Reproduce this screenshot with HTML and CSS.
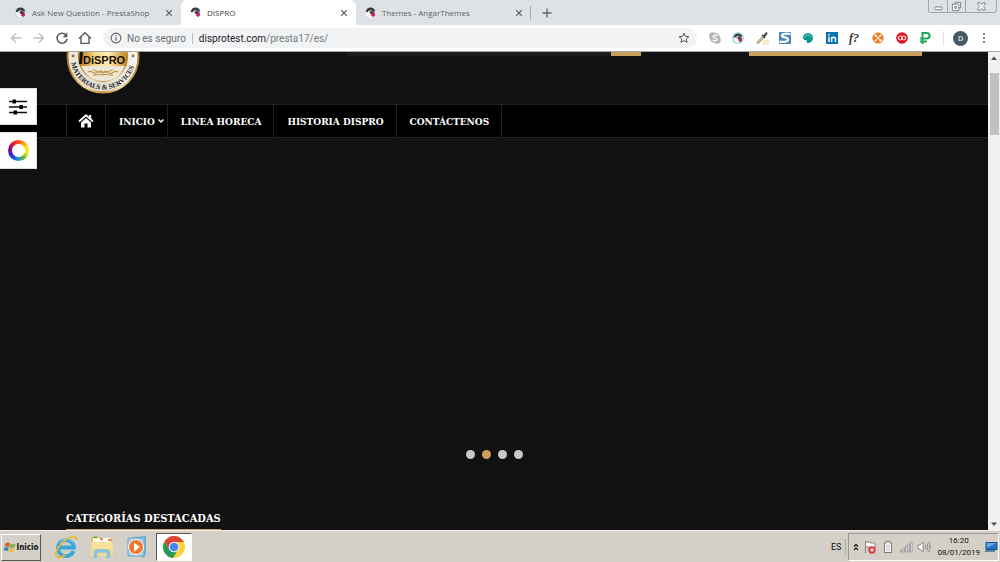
FILE: index.html
```html
<!DOCTYPE html>
<html lang="es">
<head>
<meta charset="utf-8">
<title>DISPRO</title>
<link rel="stylesheet" href="styles.css">
</head>
<body>
<svg class="defs" aria-hidden="true">
  <symbol id="puffin" viewBox="0 0 12 12">
    <circle cx="6" cy="6" r="5.500" fill="#f4f4f4"/>
    <path d="M.8 5C1 2.400 3.500.6 6 .6c3 0 5 2 5.200 4.600L8 4 5 3.500 2.500 6z" fill="#3d3b40"/>
    <path d="M2 7l1.500-2.500L6 5v2l2 3-2 1.500C4 11.500 2.500 10 2 7z" fill="#fff"/>
    <path d="M5 5l3-1 2 1.500v2L7 8 5.500 7z" fill="#4a4148"/>
    <path d="M7 7.500L10.800 6v3.500L8.500 11 6.500 9z" fill="#d6195f"/>
    <circle cx="4.500" cy="5.300" r=".8" fill="#bd8c3b"/>
  </symbol>
  <symbol id="close" viewBox="0 0 8 8"><path d="M1.200 1.200l5.600 5.600M6.800 1.200L1.200 6.800" stroke="#5a5d61" stroke-width="1.200"/></symbol>
</svg>

<header class="browser">
  <div class="tabs">
    <div class="tab"><svg class="favicon halo"><use href="#puffin"/></svg><span class="tab-title">Ask New Question - PrestaShop</span><button class="close" aria-label="Cerrar"><svg><use href="#close"/></svg></button></div>
    <div class="tab active"><svg class="favicon"><use href="#puffin"/></svg><span class="tab-title">DISPRO</span><button class="close" aria-label="Cerrar"><svg><use href="#close"/></svg></button></div>
    <div class="tab last"><svg class="favicon"><use href="#puffin"/></svg><span class="tab-title">Themes - AngarThemes</span><button class="close" aria-label="Cerrar"><svg><use href="#close"/></svg></button></div>
    <button class="new-tab" aria-label="Nueva pestaña"><svg viewBox="0 0 10 10"><path d="M5 .5v9M.5 5h9" stroke="#5f6368" stroke-width="1.300"/></svg></button>
    <div class="window-controls">
      <button aria-label="Minimizar"><svg viewBox="0 0 12 12"><rect x="2" y="6.500" width="8" height="3" rx="1" fill="#fff" stroke="#777"/></svg></button>
      <button aria-label="Restaurar"><svg viewBox="0 0 12 12"><path d="M4.500 3.500v-2h6v6h-2" fill="#fff" stroke="#777"/><path d="M1.500 3.500h7v7h-7zM4 6h2v2H4z" fill="#fff" stroke="#777"/></svg></button>
      <button class="wide" aria-label="Cerrar ventana"><svg viewBox="0 0 12 12"><path d="M2 2h2.500L6 4l1.500-2H10v1.500L8 6l2 2.500V10H7.500L6 8l-1.500 2H2V8.500L4 6 2 3.500z" fill="#fff" stroke="#777"/></svg></button>
    </div>
  </div>
  <div class="toolbar">
    <div class="nav-buttons">
      <button aria-label="Atrás"><svg viewBox="0 0 14 14"><path d="M12.500 7H2.500M7 2.500L2.500 7 7 11.500" fill="none" stroke="#babcbe" stroke-width="1.300"/></svg></button>
      <button aria-label="Adelante"><svg viewBox="0 0 14 14"><path d="M1.500 7h10M7 2.500L11.500 7 7 11.500" fill="none" stroke="#babcbe" stroke-width="1.300"/></svg></button>
      <button aria-label="Recargar"><svg viewBox="0 0 14 14"><path d="M11.300 4.500A5 5 0 1 0 12 8" fill="none" stroke="#55585c" stroke-width="1.500"/><path d="M12.300 1.500v4.700H7.700z" fill="#55585c"/></svg></button>
      <button aria-label="Inicio"><svg viewBox="0 0 14 14"><path d="M1 7.500L7 1.800l6 5.700M3 6.200v6.200h8V6.200" fill="none" stroke="#55585c" stroke-width="1.400"/></svg></button>
    </div>
    <div class="address">
      <svg class="info" viewBox="0 0 12 12"><circle cx="6" cy="6" r="4.900" fill="none" stroke="#5f6368" stroke-width="1.100"/><path d="M6 5.300v3.500M6 3v1.300" stroke="#5f6368" stroke-width="1.200"/></svg>
      <span class="secure">No es seguro</span>
      <span class="url"><b>disprotest.com</b>/presta17/es/</span>
      <svg class="star" viewBox="0 0 12 12"><path d="M6 1.200l1.400 3.200 3.500.3-2.700 2.300.8 3.400-3-1.800-3 1.800.8-3.400L1.100 4.700l3.500-.3z" fill="none" stroke="#55585c"/></svg>
    </div>
    <div class="extensions">
      <svg viewBox="0 0 14 14"><circle cx="5" cy="5" r="3.800" fill="#b5b5b5"/><circle cx="9" cy="9" r="3.800" fill="#b5b5b5"/><circle cx="7" cy="7" r="5" fill="#b5b5b5"/><path d="M9.200 5.200C8.500 3.700 5 3.800 5 5.500c0 1.800 4.200 1 4.200 3 0 1.700-3.700 1.800-4.400.2" fill="none" stroke="#fff" stroke-width="1.200"/></svg>
      <svg viewBox="0 0 14 14"><circle cx="7" cy="7" r="6" fill="#9edbe5"/><use href="#puffin" x="2" y="2" width="10" height="10"/></svg>
      <svg viewBox="0 0 14 14"><path d="M2 12.500l.5-2 5-5 1.500 1.500-5 5z" fill="#d9bd78" stroke="#777" stroke-width=".6"/><path d="M6.500 4.200l1-.8 1 .8 2-2.500c1-1 2.500.2 1.700 1.500L10 5.700l.6 1-.8.8z" fill="#3d3d3d"/><rect x="7.500" y="8.500" width="6.500" height="5.500" rx="1" fill="#f4ebcf"/></svg>
      <svg viewBox="0 0 14 14"><path d="M1 1h12v12H1z" fill="#4688bd"/><path d="M12.500 3C9 2.500 4 2.500 4 4.700 4 7 10 5.700 10 8.500c0 2.500-5 2.700-8.500 2.200" fill="none" stroke="#fff" stroke-width="2.200"/></svg>
      <svg viewBox="0 0 14 14"><path d="M7 2.300C3.800 2.300 2 4.300 2 6.600c0 2 1.500 3 3 2.700 1-.2 1 .5.8 1.200-.2 1.200.5 1.800 1.500 1.600C10 11.600 12 9.600 12 7c0-2.800-2.200-4.700-5-4.700z" fill="#009688"/><g fill="#bfe6e2"><circle cx="4" cy="6" r=".7"/><circle cx="5.800" cy="4.300" r=".7"/><circle cx="8.200" cy="4.300" r=".7"/><circle cx="10" cy="6" r=".7"/></g></svg>
      <svg viewBox="0 0 14 14"><path d="M1 1h12v12H1z" fill="#0a74b2"/><path d="M4 5.700V11M4 3v1.500M6.700 11V5.700M6.700 8c0-2.400 3.800-2.500 3.800 0v3" fill="none" stroke="#fff" stroke-width="1.500"/></svg>
      <svg viewBox="0 0 14 14"><text x="1" y="11" class="fq">f?</text></svg>
      <svg viewBox="0 0 14 14"><circle cx="7" cy="7" r="5.600" fill="#f47a27"/><path d="M4.500 4.500l5 5M9.500 4.500l-5 5" stroke="#fff"/><g fill="#fff"><circle cx="4.500" cy="4.500" r="1.300"/><circle cx="9.500" cy="4.500" r="1"/><circle cx="4.500" cy="9.500" r="1"/><circle cx="9.500" cy="9.500" r="1.300"/></g></svg>
      <svg viewBox="0 0 14 14"><circle cx="7" cy="7" r="5.800" fill="#e2141d"/><g fill="none" stroke="#fff"><circle cx="5.300" cy="7" r="2"/><circle cx="8.700" cy="7" r="2"/></g></svg>
      <svg viewBox="0 0 14 14"><path d="M4.500 13V2h4.300c3.700 0 3.700 5.500 0 5.500H2M2 10.500h7" fill="none" stroke="#20a65a" stroke-width="2"/></svg>
    </div>
    <div class="profile"><button class="avatar">D</button></div>
    <button class="menu" aria-label="Menú"><svg viewBox="0 0 4 12"><g fill="#5f6368"><circle cx="2" cy="2" r="1.100"/><circle cx="2" cy="6" r="1.100"/><circle cx="2" cy="10" r="1.100"/></g></svg></button>
  </div>
</header>

<div class="viewport">
  <main class="page">
    <div class="site-header">
      <svg class="logo" viewBox="0 0 74 42" role="img" aria-label="DISPRO Materials &amp; Services">
        <defs>
          <linearGradient id="gold"><stop offset="0" stop-color="#a77026"/><stop offset=".25" stop-color="#f4d58b"/><stop offset=".5" stop-color="#c98e36"/><stop offset=".75" stop-color="#f4dc9c"/><stop offset="1" stop-color="#b17a2c"/></linearGradient>
          <linearGradient id="face"><stop offset="0" stop-color="#b37820"/><stop offset=".35" stop-color="#f7db87"/><stop offset=".6" stop-color="#fff0b3"/><stop offset="1" stop-color="#c18725"/></linearGradient>
          <linearGradient id="silver"><stop offset="0" stop-color="#eee9dc"/><stop offset=".5" stop-color="#dfdbd4"/><stop offset="1" stop-color="#f8f6ef"/></linearGradient>
          <path id="ring" d="M4.500 5a32.500 32.500 0 0 0 65 0"/>
        </defs>
        <circle cx="37" cy="5" r="36.500" fill="url(#gold)"/>
        <circle cx="37" cy="5" r="34.500" fill="url(#silver)"/>
        <circle cx="37" cy="5" r="25" fill="url(#gold)"/>
        <path d="M13 0h48v14H14z" fill="url(#face)"/>
        <path d="M15 14h44c-5 10-12 15-22 15S20 23 15 14z" fill="#eee8d9"/>
        <path d="M14 0h3l-1 12h-3z" fill="#17130c"/>
        <text x="17" y="12" class="logo-name">DiSPRO</text>
        <g fill="none" stroke="#c39749" stroke-width="1.200"><path d="M22 20c4-3 5 3 9 1s3-3 6 0c3-3 2-2 6 0s5-4 9-1M27 23c4 1 7-2 10 0 3-2 6 1 10 0M27 18c3 0 5 3 10 2 5 1 7-2 10-2"/></g>
        <circle cx="7" cy="4" r="1.400" fill="#956956"/><circle cx="67" cy="4" r="1.400" fill="#956956"/>
        <text class="logo-ring"><textPath href="#ring" startOffset="6">MATERIALS &amp; SERVICES</textPath></text>
      </svg>
      <div class="search-strip"><span class="search-field"></span><span class="search-button"></span></div>
      <span class="cart-strip"></span>
    </div>
    <nav class="site-nav">
      <a class="home" href="#" aria-label="Inicio"><svg viewBox="0 0 16 14"><path d="M1 7.500L8 1.300l7 6.200" fill="none" stroke="#fff" stroke-width="1.800"/><path d="M11 1h2.200v4.500L11 3.500zM8 4l5 4.400V13.500H9.500V9.500h-3v4H3V8.400z" fill="#fff"/></svg></a>
      <a class="has-menu" href="#">INICIO<svg viewBox="0 0 6 6"><path d="M.5 1.500L3 4l2.500-2.500" fill="none" stroke="#fff" stroke-width="1.500"/></svg></a>
      <a href="#">LINEA HORECA</a>
      <a href="#">HISTORIA DISPRO</a>
      <a href="#">CONTÁCTENOS</a>
    </nav>
    <section class="slider">
      <button aria-label="1"></button><button class="current" aria-label="2"></button><button aria-label="3"></button><button aria-label="4"></button>
    </section>
    <section class="featured"><h2>CATEGORÍAS DESTACADAS</h2></section>
  </main>
  <div class="scrollbar"><svg viewBox="0 0 12 12"><path d="M3 8l3-3.500L9 8z" fill="#505050"/></svg><span class="thumb"></span><svg class="down" viewBox="0 0 12 12"><path d="M3 4.500L6 8l3-3.500z" fill="#505050"/></svg></div>
  <div class="side-tools">
    <button aria-label="Ajustes"><svg viewBox="0 0 20 18"><path d="M1 3.500h18M1 9h18M1 14.500h18" stroke="#111" stroke-width="1.400"/><path d="M4.500 1.500H8v4H4.500zM11.500 7H15v4h-3.500zM5.500 12.500H9v4H5.500z" fill="#000"/></svg></button>
    <button aria-label="Colores"><span class="wheel"></span></button>
  </div>
</div>

<footer class="taskbar">
  <button class="start"><svg viewBox="0 0 12 12"><path d="M1.500 2.500C3 1 4.500 1.500 6 2.500L5 6C3.500 5 2 5 .5 6z" fill="#e4572b"/><path d="M6.500 2.700c1.500 1 3 1 5 0l-1 3.500c-2 1-3.500 1-5 0z" fill="#77b443"/><path d="M.3 6.600C2 5.700 3.500 5.800 4.800 6.700l-1 3.500C2.500 9.300 1 9.300-.5 10z" fill="#3c82cb"/><path d="M5.300 7c1.500 1 3 1 5 0l-1 3.500c-2 1-3.500.8-5 0z" fill="#f3bd38"/></svg>Inicio</button>
  <div class="apps">
    <button aria-label="Internet Explorer"><svg viewBox="0 0 24 24"><path d="M19.500 16A8 8 0 1 1 20 12.500H6" fill="none" stroke="#36a8dc" stroke-width="3.800"/><path d="M6 9a7 7 0 0 1 13-1" fill="none" stroke="#8ddcf5"/><path d="M3.500 22C-2 19 7 7 15 3c5-2.500 8-2 7 2M3.500 22c2 1 5-.5 8-2.500" fill="none" stroke="#ecb82e" stroke-width="1.800"/></svg></button>
    <button aria-label="Explorador"><svg viewBox="0 0 24 24"><path d="M1 3l1-1.500h7L10 3h12v17H1z" fill="#dcbf62"/><path d="M3 3h18v5H3z" fill="#fffbe9"/><path d="M4 2.500h3" stroke="#3ba558" stroke-width="1.500"/><path d="M10 4h3M18 5h3" stroke="#d45b3c" stroke-width="1.500"/><path d="M1 7h22v14H1z" fill="#f5dc8c"/><path d="M2 9h20M2 12h20" stroke="#fff0b8"/><path d="M5.500 23v-5q0-2 2-2h9q2 0 2 2v5" fill="none" stroke="#83c5e5" stroke-width="3.500"/></svg></button>
    <button aria-label="Reproductor"><svg viewBox="0 0 24 24"><path d="M6 2l14-1v20l-4 2z" fill="#77acce"/><path d="M2 3h16v18H2z" fill="#a4cee6" stroke="#6ca6ce"/><circle cx="10" cy="12" r="7.500" fill="#f2752a" stroke="#fff"/><path d="M8 7.500l6 4.500-6 4.500z" fill="#fff"/><path d="M19 20h5" stroke="#aed2e4" stroke-width="2"/></svg></button>
    <button class="running" aria-label="Chrome"><svg viewBox="0 0 24 24"><circle cx="12" cy="12" r="11" fill="#fbd33d"/><path d="M2.500 6.500A11 11 0 0 1 21.500 6.500L12 7l-5 7z" fill="#dc4638"/><path d="M2.500 6.500A11 11 0 0 0 11 23l5-8.500-4 2.500-5-3z" fill="#239b56"/><path d="M12 6.500h9.500" stroke="#dc4638"/><circle cx="12" cy="12" r="5.300" fill="#f4f4f4"/><circle cx="12" cy="12" r="4.300" fill="#4586ee"/></svg></button>
  </div>
  <span class="lang">ES</span>
  <div class="tray">
    <svg class="narrow" viewBox="0 0 6 12"><path d="M1 5.500l2-2 2 2M1 9l2-2 2 2" fill="none" stroke="#222" stroke-width="1.400"/></svg>
    <svg viewBox="0 0 14 14"><path d="M2.500 1v12M3 2h4l1 1h4v5H8L7 7H3" fill="#f8f8f6" stroke="#858585"/><circle cx="9" cy="10" r="3.700" fill="#dc3734"/><path d="M7.600 8.600l2.800 2.800M10.400 8.600l-2.800 2.800" stroke="#fff" stroke-width="1.200"/></svg>
    <svg viewBox="0 0 14 14"><path d="M5 1.500h4v1.500h1.500v9.500h-7V3H5z" fill="#fff" stroke="#7a7a7a"/><path d="M5.500 5v5.500h3V5z" fill="#eee" stroke="#aaa" stroke-width=".6"/></svg>
    <svg viewBox="0 0 14 14"><path d="M1.500 10h1.500v2H1.500zM4 8h1.500v4H4zM6.500 6H8v6H6.500zM9 4h1.500v8H9zM11.500 2H13v10h-1.500z" fill="#fff" stroke="#858585" stroke-width=".7"/></svg>
    <svg viewBox="0 0 14 14"><path d="M1 5h2l3-3v10L3 9H1z" fill="#fff" stroke="#888"/><path d="M8 5q1.500 2 0 4M9.800 3.500q2.500 3.500 0 7M11.500 2q3.500 5 0 10" fill="none" stroke="#888"/></svg>
    <div class="clock"><span>16:20</span><span>08/01/2019</span></div>
    <svg viewBox="0 0 14 14"><path d="M2 2.500h11v7H2z" fill="#2775c5" stroke="#174c86"/><path d="M2.500 3h10L3 8z" fill="#61a9e6"/><path d="M1 11h10" stroke="#386e9d" stroke-width="1.500"/></svg>
  </div>
</footer>
</body>
</html>
```

FILE: styles.css
```css
* { box-sizing: border-box; }
body { margin: 0; height: 100vh; display: flex; flex-direction: column; overflow: hidden; font-family: Roboto, "Liberation Sans", sans-serif; }
button { margin: 0; padding: 0; border: 0; background: none; font: inherit; color: inherit; display: flex; align-items: center; justify-content: center; }
svg { display: block; flex: none; }
.defs { position: absolute; width: 0; height: 0; }

.browser { background: #dee1e6; border-bottom: 1px solid #a5a7a9; }
.tabs { display: flex; height: 25px; padding-left: 6px; }
.tab { display: flex; align-items: center; width: 175px; padding: 0 8px 0 9px; gap: 6px; color: #5f6368; font-size: 8px; }
.tab.active { background: #fff; border-radius: 6px 6px 0 0; color: #3c4043; }
.tab.last { position: relative; }
.tab.last::after { content: ""; position: absolute; right: 0; top: 6px; width: 1px; height: 14px; background: #a9acb1; }
.favicon { width: 11px; height: 11px; }
.favicon.halo { border-radius: 50%; background: #9edbe5; }
.tab-title { flex: 1; white-space: nowrap; font-family: "Open Sans", Roboto, sans-serif; }
.close svg { width: 8px; height: 8px; }
.new-tab { width: 32px; }
.new-tab svg { width: 10px; height: 10px; }
.window-controls { display: flex; height: 13px; margin: 0 3px 0 auto; border: 1px solid #a2a5a9; border-top: 0; border-radius: 0 0 3px 3px; }
.window-controls button { width: 18px; }
.window-controls .wide { width: 31px; }
.window-controls button + button { border-left: 1px solid #a2a5a9; }
.window-controls svg { width: 11px; height: 11px; }

.toolbar { display: flex; align-items: center; height: 26px; padding: 0 14px 0 9px; background: #fff; }
.nav-buttons { display: flex; gap: 9px; margin-right: 11px; }
.nav-buttons svg { width: 14px; height: 14px; }
.address { flex: 1; display: flex; align-items: center; height: 20px; padding: 0 7px; border-radius: 10px; background: #f1f3f4; color: #6b6f73; font-size: 10px; white-space: nowrap; }
.info { width: 12px; height: 12px; margin-right: 5px; }
.secure { padding-right: 6px; margin-right: 6px; border-right: 1px solid #babdc1; }
.url { flex: 1; color: #777b80; }
.url b { font-weight: 400; color: #202124; }
.star { width: 12px; height: 12px; }
.extensions { display: flex; justify-content: space-between; width: 224px; margin-left: 11px; }
.extensions svg { width: 14px; height: 14px; }
.fq { font: italic bold 12px "Liberation Serif", serif; fill: #333; }
.profile { display: flex; margin-left: 11px; padding-left: 9px; border-left: 1px solid #e0e1e3; }
.avatar { width: 15px; height: 15px; border-radius: 50%; background: #455a64; color: #fff; font-size: 8px; }
.menu { margin-left: 14px; }
.menu svg { width: 4px; height: 12px; }

.viewport { position: relative; flex: 1; min-height: 0; display: flex; background: #111; }
.page { flex: 1; display: flex; flex-direction: column; }
.site-header { display: flex; align-items: flex-start; height: 52px; padding: 0 66px; }
.logo { width: 74px; height: 42px; }
.logo-name { font: bold 11px "Liberation Sans", sans-serif; fill: #171008; }
.logo-ring { font: bold 7px "Liberation Serif", serif; fill: #222; }
.search-strip { display: flex; width: 294px; height: 4px; margin: 0 108px 0 auto; }
.search-field { flex: 1; background: #1c1c1c; }
.search-button { width: 30px; background: #c9a15b; }
.cart-strip { width: 173px; height: 4px; background: #c9a15b; }
.site-nav { display: flex; height: 34px; padding-left: 66px; border: solid #222; border-width: 1px 0; background: #000; }
.site-nav a { display: flex; align-items: center; padding: 0 12px 0 13px; border-right: 1px solid #222; color: #fff; font: bold 10px "DejaVu Serif Condensed", "DejaVu Serif", serif; text-decoration: none; white-space: nowrap; }
.site-nav .home { padding: 0 11px; border-left: 1px solid #222; }
.home svg { width: 16px; height: 14px; }
.site-nav .has-menu { padding-right: 3px; gap: 3px; }
.has-menu svg { width: 6px; height: 6px; }
.slider { flex: 1; display: flex; align-items: flex-end; justify-content: center; gap: 7px; padding-bottom: 51px; }
.slider button { width: 9px; height: 9px; border-radius: 50%; background: #c8c8c8; }
.slider .current { background: #c9a15b; }
.featured { display: flex; padding: 0 66px; }
.featured h2 { margin: 0; padding-bottom: 2px; border-bottom: 1px solid #c9a15b; color: #fff; font: bold 11px/17px "DejaVu Serif Condensed", "DejaVu Serif", serif; }
.scrollbar { display: flex; flex-direction: column; align-items: center; width: 12px; background: #f1f1f1; }
.scrollbar svg { width: 12px; height: 12px; }
.thumb { width: 9px; height: 62px; margin-top: 9px; background: #c1c1c1; }
.scrollbar .down { margin-top: auto; }
.side-tools { position: absolute; left: 0; top: 36px; display: flex; flex-direction: column; gap: 7px; }
.side-tools button { width: 37px; height: 37px; background: #fff; border: 1px solid #ddd; border-left: 0; }
.side-tools svg { width: 20px; height: 18px; }
.wheel { width: 21px; height: 21px; border-radius: 50%; background: radial-gradient(circle, #fff 6px, transparent 7px), conic-gradient(#ff5020, #ff9b10, #ffe51a, #e6f020, #63b52c, #1a9fba, #1748ee, #4d16c0, #951071, #f21b23, #ff5020); }

.taskbar { display: flex; align-items: center; height: 32px; padding: 2px 1px 1px; border-top: 1px solid #f3f1ec; background: #d4d0c8; color: #111; }
.start { gap: 1px; width: 40px; height: 27px; border: 1px solid; border-color: #fff #555 #555 #fff; font: bold 8px "DejaVu Sans Condensed", sans-serif; }
.start svg { width: 12px; height: 12px; }
.apps { display: flex; margin-left: 7px; height: 28px; }
.apps button { width: 36px; }
.apps svg { width: 24px; height: 24px; }
.apps .running { border: 1px solid; border-color: #555 #fff #fff #555; background: #fff; }
.lang { margin-left: auto; padding-right: 4px; border-right: 1px solid #aaa; font-size: 9px; line-height: 16px; }
.tray { display: flex; align-items: center; height: 28px; margin-left: 2px; padding: 0 0 0 4px; gap: 4px; border: 1px solid; border-color: #999 #fff #fff #999; }
.tray svg { width: 14px; height: 14px; }
.tray .narrow { width: 6px; height: 12px; }
.clock { display: flex; flex-direction: column; align-items: center; margin-left: 2px; font-size: 8px; line-height: 12px; }
```
